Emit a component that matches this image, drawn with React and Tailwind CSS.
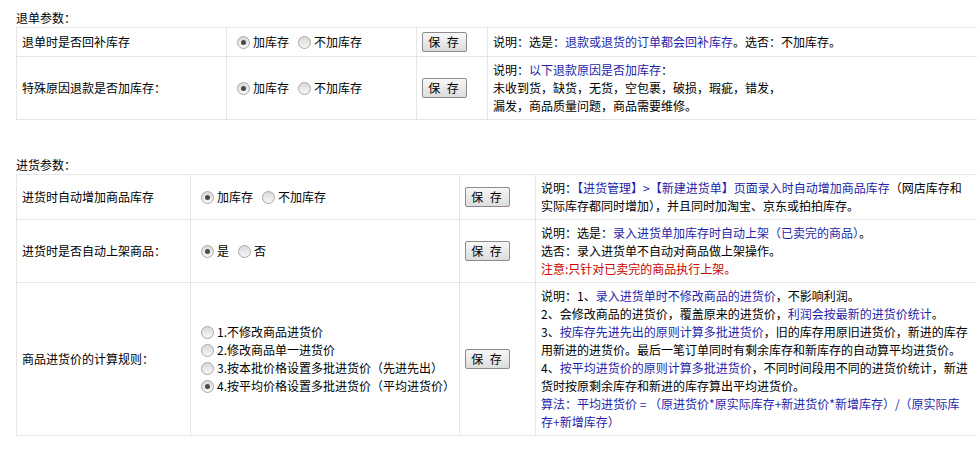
import React from "react";

const B = ({ children }) => <span className="text-[#1f1fa8]">{children}</span>;

function Radio({ checked }) {
  return (
    <span className="ml-[5px] inline-flex h-[13px] w-[13px] shrink-0 items-center justify-center rounded-full border border-[#a9a9a9] bg-linear-to-b from-[#d9d9d9] to-[#f7f7f7]">
      {checked && <span className="h-[5px] w-[5px] rounded-full bg-[#4a4a4a]" />}
    </span>
  );
}

function Opt({ checked, children }) {
  return (
    <span className="inline-flex items-center">
      <Radio checked={checked} />
      <span className="ml-[3px] whitespace-nowrap">{children}</span>
    </span>
  );
}

function SaveBtn() {
  return (
    <button className="h-[20px] w-[45px] rounded-[2px] border border-[#8c8c8c] bg-linear-to-b from-[#f7f7f7] to-[#dcdcdc] text-[12px] leading-[16px] tracking-[2px] text-black">
      保 存
    </button>
  );
}

const td = "border border-[#e6e6e6] px-[5px] py-[4px] align-middle";

export default function App() {
  return (
    <div className="h-[450px] w-[977px] overflow-hidden bg-white pl-[16px] pt-[9px] font-['Noto_Sans_CJK_SC',sans-serif] text-[12px] leading-[18px] text-black">
      <div>退单参数：</div>
      <table className="w-[962px] table-fixed border-collapse">
        <colgroup>
          <col className="w-[210px]" />
          <col className="w-[190px]" />
          <col className="w-[71px]" />
          <col />
        </colgroup>
        <tbody>
          <tr>
            <td className={td}>退单时是否回补库存</td>
            <td className={td}>
              <div className="flex gap-[4px]">
                <Opt checked>加库存</Opt>
                <Opt>不加库存</Opt>
              </div>
            </td>
            <td className={td}>
              <SaveBtn />
            </td>
            <td className={td}>
              说明：选是：<B>退款或退货的订单都会回补库存</B>。选否：不加库存。
            </td>
          </tr>
          <tr>
            <td className={td}>特殊原因退款是否加库存：</td>
            <td className={td}>
              <div className="flex gap-[4px]">
                <Opt checked>加库存</Opt>
                <Opt>不加库存</Opt>
              </div>
            </td>
            <td className={td}>
              <SaveBtn />
            </td>
            <td className={td}>
              <div>
                说明：<B>以下退款原因是否加库存</B>：
              </div>
              <div>未收到货，缺货，无货，空包裹，破损，瑕疵，错发，</div>
              <div>漏发，商品质量问题，商品需要维修。</div>
            </td>
          </tr>
        </tbody>
      </table>

      <div className="mt-[36px]">进货参数：</div>
      <table className="w-[962px] table-fixed border-collapse">
        <colgroup>
          <col className="w-[174px]" />
          <col className="w-[269px]" />
          <col className="w-[76px]" />
          <col />
        </colgroup>
        <tbody>
          <tr>
            <td className={td}>进货时自动增加商品库存</td>
            <td className={td}>
              <div className="flex gap-[4px]">
                <Opt checked>加库存</Opt>
                <Opt>不加库存</Opt>
              </div>
            </td>
            <td className={td}>
              <SaveBtn />
            </td>
            <td className={td}>
              <div className="whitespace-nowrap">
                说明：<B>【进货管理】&gt;【新建进货单】页面录入时自动增加商品库存</B>（网店库存和
              </div>
              <div className="whitespace-nowrap">实际库存都同时增加），并且同时加淘宝、京东或拍拍库存。</div>
            </td>
          </tr>
          <tr>
            <td className={td}>进货时是否自动上架商品：</td>
            <td className={td}>
              <div className="flex gap-[4px]">
                <Opt checked>是</Opt>
                <Opt>否</Opt>
              </div>
            </td>
            <td className={td}>
              <SaveBtn />
            </td>
            <td className={td}>
              <div>
                说明：选是：<B>录入进货单加库存时自动上架（已卖完的商品）</B>。
              </div>
              <div>选否：录入进货单不自动对商品做上架操作。</div>
              <div className="text-[#cc0000]">注意:只针对已卖完的商品执行上架。</div>
            </td>
          </tr>
          <tr>
            <td className={td}>商品进货价的计算规则：</td>
            <td className={td}>
              <div className="flex flex-col">
                <Opt>1.不修改商品进货价</Opt>
                <Opt>2.修改商品单一进货价</Opt>
                <Opt>3.按本批价格设置多批进货价（先进先出）</Opt>
                <Opt checked>4.按平均价格设置多批进货价（平均进货价）</Opt>
              </div>
            </td>
            <td className={td}>
              <SaveBtn />
            </td>
            <td className={`${td} whitespace-nowrap`}>
              <div>
                说明：1、<B>录入进货单时不修改商品的进货价</B>，不影响利润。
              </div>
              <div>
                2、会修改商品的进货价，覆盖原来的进货价，<B>利润会按最新的进货价统计</B>。
              </div>
              <div>
                3、<B>按库存先进先出的原则计算多批进货价</B>，旧的库存用原旧进货价，新进的库存
              </div>
              <div>用新进的进货价。最后一笔订单同时有剩余库存和新库存的自动算平均进货价。</div>
              <div>
                4、<B>按平均进货价的原则计算多批进货价</B>，不同时间段用不同的进货价统计，新进
              </div>
              <div>货时按原剩余库存和新进的库存算出平均进货价。</div>
              <div>
                <B>算法：平均进货价 = （原进货价*原实际库存+新进货价*新增库存）/（原实际库</B>
              </div>
              <div>
                <B>存+新增库存）</B>
              </div>
            </td>
          </tr>
        </tbody>
      </table>
    </div>
  );
}
